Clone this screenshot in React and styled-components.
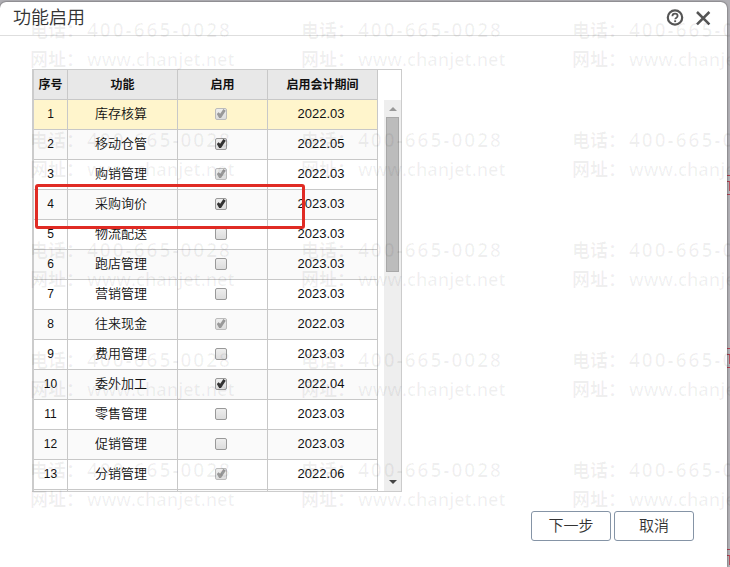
import { useState } from "react";
import styled, { createGlobalStyle } from "styled-components";

const features = [
  { name: "库存核算", enabled: true, locked: true, period: "2022.03" },
  { name: "移动仓管", enabled: true, locked: false, period: "2022.05" },
  { name: "购销管理", enabled: true, locked: true, period: "2022.03" },
  { name: "采购询价", enabled: true, locked: false, period: "2023.03" },
  { name: "物流配送", enabled: false, locked: false, period: "2023.03" },
  { name: "跑店管理", enabled: false, locked: false, period: "2023.03" },
  { name: "营销管理", enabled: false, locked: false, period: "2023.03" },
  { name: "往来现金", enabled: true, locked: true, period: "2022.03" },
  { name: "费用管理", enabled: false, locked: false, period: "2023.03" },
  { name: "委外加工", enabled: true, locked: false, period: "2022.04" },
  { name: "零售管理", enabled: false, locked: false, period: "2023.03" },
  { name: "促销管理", enabled: false, locked: false, period: "2023.03" },
  { name: "分销管理", enabled: true, locked: true, period: "2022.06" },
];

const App = () => {
  const [rows, setRows] = useState(features);
  const [selected, setSelected] = useState(0);

  const toggle = (index) => {
    setRows(
      rows.map((row, i) =>
        i === index ? { ...row, enabled: !row.enabled } : row
      )
    );
  };

  return (
    <Page>
      <GlobalStyle />
      {[175, 348, 549].map((top) => (
        <Stamp key={top} $top={top} />
      ))}
      <Dialog role="dialog" aria-labelledby="dialog-title">
        <Header>
          <Title id="dialog-title">功能启用</Title>
          <IconButton type="button" aria-label="帮助">
            <svg width="18" height="18" viewBox="0 0 18 18" fill="none">
              <circle cx="9" cy="8.5" r="7.2" stroke="#555" strokeWidth="2.2" />
              <path
                d="M6.4 7.2C6.4 5.6 7.5 4.7 9 4.7s2.6.9 2.6 2.3c0 1.7-2.4 1.6-2.4 3.3"
                stroke="#555"
                strokeWidth="1.8"
              />
              <path d="M8.2 11.3h1.9v1.8H8.2z" fill="#555" />
            </svg>
          </IconButton>
          <IconButton type="button" aria-label="关闭">
            <svg width="18" height="18" viewBox="0 0 18 18" fill="none">
              <path
                d="M3 3l12.4 12.4M15.4 3L3 15.4"
                stroke="#555"
                strokeWidth="2.5"
              />
            </svg>
          </IconButton>
        </Header>

        <Content>
          <Grid>
            <TableArea>
              <Table>
                <thead>
                  <tr>
                    <HeadCell $width={34}>序号</HeadCell>
                    <HeadCell $width={110}>功能</HeadCell>
                    <HeadCell $width={90}>启用</HeadCell>
                    <HeadCell $width={110}>启用会计期间</HeadCell>
                  </tr>
                </thead>
                <tbody>
                  {rows.map((row, index) => (
                    <Row
                      key={row.name}
                      $selected={index === selected}
                      onClick={() => setSelected(index)}
                    >
                      <IndexCell>{index + 1}</IndexCell>
                      <Cell>{row.name}</Cell>
                      <Cell>
                        <Checkbox
                          type="checkbox"
                          aria-label={row.name}
                          checked={row.enabled}
                          disabled={row.locked}
                          onChange={() => toggle(index)}
                        />
                      </Cell>
                      <Cell>{row.period}</Cell>
                    </Row>
                  ))}
                  <Row>
                    <IndexCell />
                    <Cell />
                    <Cell />
                    <Cell />
                  </Row>
                </tbody>
              </Table>
            </TableArea>
            <Scrollbar aria-hidden="true">
              <ArrowUp />
              <Thumb />
              <ArrowDown />
            </Scrollbar>
            <Highlight />
          </Grid>
        </Content>

        <Footer>
          <Button type="button">下一步</Button>
          <Button type="button">取消</Button>
        </Footer>
      </Dialog>

      <Watermark aria-hidden="true">
        {Array.from({ length: 15 }, (_, i) => (
          <Mark key={i}>
            <span>电话：</span>
            <Phone>400-665-0028</Phone>
            <span>网址：</span>
            <span>www.chanjet.net</span>
          </Mark>
        ))}
      </Watermark>
    </Page>
  );
};

export default App;

const GlobalStyle = createGlobalStyle`
  * {
    box-sizing: border-box;
  }

  body {
    margin: 0;
    font-family: "Liberation Sans", "Noto Sans CJK SC", sans-serif;
    color: #111;
  }
`;

const Page = styled.div`
  position: relative;
  height: 100vh;
  min-height: 400px;
  padding: 2px 3px 0 0;
  background: #b1b0b5;
  overflow: hidden;
`;

const Stamp = styled.div`
  position: absolute;
  top: ${(props) => props.$top}px;
  right: 0;
  width: 3px;
  height: 20px;
  border: solid #b04050;
  border-width: 1px 0;

  &::before {
    content: "";
    display: block;
    height: 9px;
    margin-top: 5px;
    border-top: 1px solid #b04050;
    border-right: 1px solid #b8505c;
  }
`;

const Dialog = styled.div`
  position: relative;
  display: flex;
  flex-direction: column;
  height: 100%;
  background: #fff;
  border-radius: 6px 6px 0 0;
  box-shadow: 0 0 2px rgba(0, 0, 0, 0.7);
`;

const Header = styled.div`
  display: flex;
  align-items: center;
  gap: 10px;
  height: 34px;
  padding: 0 15px 2px 13px;
  border-bottom: 1px solid #dedede;
`;

const Title = styled.h1`
  flex: 1;
  margin: 0;
  font-size: 18px;
  line-height: 24px;
  font-weight: 350;
  color: #333;
`;

const IconButton = styled.button`
  display: flex;
  padding: 0;
  border: none;
  background: none;
  cursor: pointer;
`;

const Content = styled.div`
  flex: 1;
  display: flex;
  min-height: 0;
  padding: 33px 32px 19px;
`;

const Grid = styled.div`
  position: relative;
  display: flex;
  border: 1px solid #ccc;
`;

const TableArea = styled.div`
  overflow: hidden;
`;

const Table = styled.table`
  width: 345px;
  table-layout: fixed;
  border-collapse: separate;
  border-spacing: 0;
  border-left: 1px solid #ccc;
`;

const HeadCell = styled.th`
  width: ${(props) => props.$width}px;
  height: 30px;
  padding: 1px 0 0;
  border-right: 1px solid #c8c8c8;
  border-bottom: 1px solid #c8c8c8;
  background: #e8e8e8;
  font-size: 12px;
  line-height: 18px;
  font-weight: 700;
  color: #111;
`;

const Cell = styled.td`
  height: 30px;
  padding: 0 3px 2px 0;
  border-right: 1px solid #c8c8c8;
  border-bottom: 1px solid #c8c8c8;
  font-size: 13px;
  line-height: 20px;
  font-weight: 350;
  text-align: center;
`;

const IndexCell = styled(Cell)`
  padding: 0 0 2px;
  font-size: 12px;
`;

const Row = styled.tr`
  background: ${(props) => (props.$selected ? "#fff5cc" : "#fff")};

  &:nth-child(even) {
    background: ${(props) => (props.$selected ? "#fff5cc" : "#fafafa")};
  }
`;

const Checkbox = styled.input`
  appearance: none;
  display: block;
  width: 12px;
  height: 12px;
  margin: 0 auto;
  border: 1px solid #999;
  border-radius: 2px;
  background: linear-gradient(#eee, #dcdcdc);

  &:checked::after {
    content: "";
    display: block;
    width: 10px;
    height: 10px;
    background: #333;
    clip-path: polygon(8% 55%, 26% 38%, 42% 52%, 74% 6%, 98% 22%, 50% 94%, 32% 94%);
  }

  &:disabled {
    border-color: #bbb;
  }

  &:disabled::after {
    background: #999;
  }
`;

const Scrollbar = styled.div`
  display: flex;
  flex-direction: column;
  align-items: center;
  width: 17px;
  margin: 30px 0 0 6px;
  background: #eee;
`;

const ArrowUp = styled.div`
  margin: 7px 0 6px;
  border: 4px solid transparent;
  border-top: none;
  border-bottom-color: #999;
`;

const Thumb = styled.div`
  width: 13px;
  height: 155px;
  border: 1px solid #a8a8a8;
  background: #bcbcbc;
`;

const ArrowDown = styled.div`
  margin: auto 0 7px;
  border: 4px solid transparent;
  border-bottom: none;
  border-top-color: #444;
`;

/* frame around the fourth row */
const Highlight = styled.div`
  position: absolute;
  top: 114px;
  left: 2px;
  width: 270px;
  height: 45px;
  border: 3px solid #e02b24;
  border-radius: 3px;
  pointer-events: none;
`;

const Footer = styled.div`
  display: flex;
  justify-content: flex-end;
  gap: 3px;
  padding: 0 33px 26px;
`;

const Button = styled.button`
  width: 80px;
  height: 30px;
  padding: 0;
  border: 1px solid #8594a6;
  border-radius: 3px;
  background: #fff;
  font-family: inherit;
  font-size: 15px;
  line-height: 20px;
  font-weight: 350;
  color: #333;
  cursor: pointer;
`;

const Watermark = styled.div`
  position: absolute;
  inset: 0;
  display: grid;
  grid-template-columns: repeat(3, 271px);
  grid-auto-rows: 110px;
  padding: 16px 0 0 30px;
  overflow: hidden;
  pointer-events: none;
`;

const Mark = styled.div`
  display: grid;
  grid-template-columns: 57px auto;
  grid-auto-rows: 29px;
  align-content: start;
  justify-content: start;
  font-family: "Open Sans", "Noto Sans CJK SC", sans-serif;
  font-size: 18px;
  line-height: 29px;
  font-weight: 600;
  white-space: nowrap;
  color: rgba(0, 0, 0, 0.06);
`;

const Phone = styled.span`
  font-size: 19px;
  letter-spacing: 2px;
`;
